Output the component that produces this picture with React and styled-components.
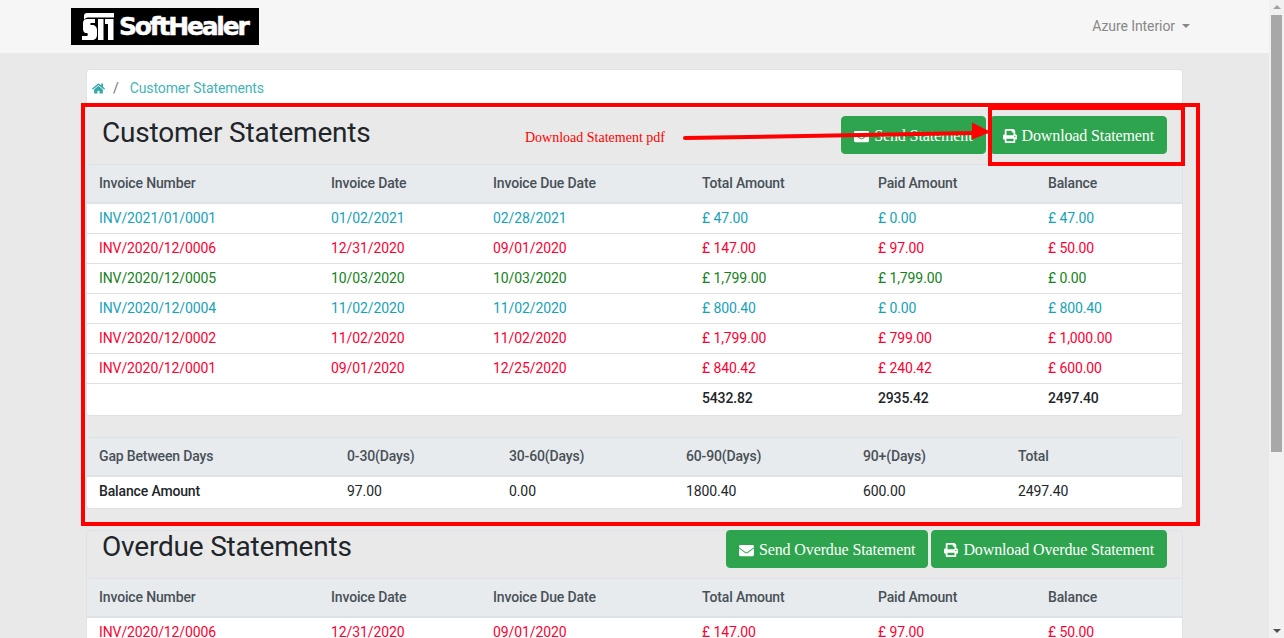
import React from 'react';
import styled, { createGlobalStyle } from 'styled-components';
import { FaHome, FaEnvelope, FaPrint } from 'react-icons/fa';

const GlobalStyle = createGlobalStyle`
    html, body {
        margin: 0;
        height: 638px;
        overflow: hidden;
        background: #e9e9e9;
        font-family: Roboto, "Liberation Sans", sans-serif;
        font-size: 14px;
        color: #212529;
    }
`;

const Page = styled.div`
    position: relative;
    width: 1284px;
    height: 638px;
    overflow: hidden;
`;

const Navbar = styled.header`
    display: flex;
    align-items: center;
    justify-content: space-between;
    height: 53px;
    box-sizing: border-box;
    padding: 0 94px 0 71px;
    background: #f6f6f6;
`;

const Logo = styled.div`
    display: flex;
    align-items: center;
    gap: 5px;
    width: 188px;
    height: 37px;
    box-sizing: border-box;
    padding-left: 11px;
    background: #000;
    overflow: hidden;
`;

const LogoText = styled.span`
    color: #fff;
    font-family: "DejaVu Sans", sans-serif;
    font-weight: 700;
    font-size: 25px;
    letter-spacing: -2.2px;
    -webkit-text-stroke: 0.5px #fff;
`;

const UserMenu = styled.div`
    display: flex;
    align-items: center;
    gap: 7px;
    margin-bottom: 2px;
    color: #888;
    font-size: 14px;
    letter-spacing: -0.08px;
    &::after {
        content: '';
        border-top: 4px solid #888;
        border-left: 4px solid transparent;
        border-right: 4px solid transparent;
    }
`;

const Main = styled.main`
    width: 1097px;
    margin-left: 86px;
    padding-top: 16px;
`;

const Breadcrumb = styled.nav`
    display: flex;
    align-items: center;
    height: 39px;
    box-sizing: border-box;
    padding: 0 0 2px 6px;
    background: #fff;
    border: 1px solid #dfe2e5;
    border-bottom: 0;
    border-radius: 4px 4px 0 0;
    color: #6c757d;
    letter-spacing: -0.1px;
    svg {
        color: #35a7a9;
        font-size: 13px;
        margin-left: -1px;
    }
`;

const Crumb = styled.span`
    margin-left: 11px;
    color: #45b3b5;
`;

const Slash = styled.span`
    margin-left: 8px;
`;

const SectionHead = styled.div`
    display: flex;
    align-items: flex-start;
    justify-content: space-between;
    box-sizing: border-box;
    height: ${(p) => p.$height}px;
    padding: ${(p) => p.$top}px ${(p) => p.$side}px 0;
`;

const Title = styled.h2`
    margin: ${(p) => p.$shift}px 0 0;
    font-size: 28px;
    font-weight: 400;
    line-height: 1.2;
    letter-spacing: -0.2px;
    color: #212529;
`;

const Actions = styled.div`
    display: flex;
    gap: ${(p) => p.$gap}px;
    margin-top: ${(p) => p.$shift || 0}px;
`;

const Button = styled.button`
    display: flex;
    align-items: center;
    gap: 5px;
    height: 38px;
    padding: 2px 12px 0;
    border: 1px solid #2ea44f;
    border-radius: 4px;
    background: #2ea44f;
    color: #fff;
    font-family: "Liberation Serif", serif;
    font-size: 16px;
    letter-spacing: -0.12px;
`;

const MailIcon = styled(FaEnvelope)`
    font-size: 15px;
`;

const PrintIcon = styled(FaPrint)`
    font-size: 14px;
`;

const TableCard = styled.div`
    background: #fff;
    border: 1px solid #dee2e6;
    border-radius: 4px;
    overflow: hidden;
    margin: 0 ${(p) => p.$inset || 0}px ${(p) => p.$gap || 0}px;
`;

const Table = styled.table`
    width: 100%;
    border-collapse: collapse;
    table-layout: fixed;
`;

const HeadCell = styled.th`
    height: 36px;
    padding: 0 12px 1px;
    background: #e7ebee;
    border-bottom: 2px solid #dee2e6;
    color: #495057;
    font-weight: 500;
    letter-spacing: -0.15px;
    text-align: left;
`;

const Row = styled.tr`
    color: ${(p) => p.$color || '#212529'};
`;

const Cell = styled.td`
    height: 27px;
    padding: 0 12px ${(p) => (p.$tall ? 4 : 2)}px;
    border-top: 1px solid #dee2e6;
    font-weight: ${(p) => (p.$bold ? 500 : 400)};
    letter-spacing: ${(p) => (p.$bold ? -0.15 : -0.1)}px;
`;

const SecondCard = styled.section`
    margin-top: 21px;
    border: 1px solid #dee2e6;
    border-bottom: 0;
    border-radius: 4px 4px 0 0;
`;

// red markup drawn on top of the screenshot
const Markup = styled.svg`
    position: absolute;
    left: 0;
    top: 0;
    pointer-events: none;
`;

const MarkupLabel = styled.span`
    position: absolute;
    left: 525px;
    top: 130px;
    color: #ff0000;
    font-family: "Liberation Serif", serif;
    font-size: 14px;
`;

const Scrollbar = styled.div`
    position: absolute;
    right: 0;
    top: 0;
    width: 15px;
    height: 638px;
    background: #f1f1f1;
    &::before {
        content: '';
        position: absolute;
        left: 2px;
        top: 15px;
        width: 11px;
        height: 437px;
        background: #a8a8a8;
    }
`;

const ScrollArrow = styled.span`
    position: absolute;
    left: 4px;
    ${(p) => (p.$down ? 'bottom: 5px;' : 'top: 5px;')}
    border-left: 4px solid transparent;
    border-right: 4px solid transparent;
    ${(p) => (p.$down ? 'border-top: 4px solid #505050;' : 'border-bottom: 4px solid #a0a0a0;')}
`;

const columns = [232, 162, 209, 176, 170, 148];
const agingColumns = [248, 162, 177, 177, 155, 178];

const heads = ['Invoice Number', 'Invoice Date', 'Invoice Due Date', 'Total Amount', 'Paid Amount', 'Balance'];
const teal = '#17a2b8';
const red = '#ff0033';
const green = '#148220';

const invoices = [
    [teal, 'INV/2021/01/0001', '01/02/2021', '02/28/2021', '£ 47.00', '£ 0.00', '£ 47.00'],
    [red, 'INV/2020/12/0006', '12/31/2020', '09/01/2020', '£ 147.00', '£ 97.00', '£ 50.00'],
    [green, 'INV/2020/12/0005', '10/03/2020', '10/03/2020', '£ 1,799.00', '£ 1,799.00', '£ 0.00'],
    [teal, 'INV/2020/12/0004', '11/02/2020', '11/02/2020', '£ 800.40', '£ 0.00', '£ 800.40'],
    [red, 'INV/2020/12/0002', '11/02/2020', '11/02/2020', '£ 1,799.00', '£ 799.00', '£ 1,000.00'],
    [red, 'INV/2020/12/0001', '09/01/2020', '12/25/2020', '£ 840.42', '£ 240.42', '£ 600.00'],
];

function Cols({ widths }) {
    return (
        <colgroup>
            {widths.map((w, i) => <col key={i} width={w} />)}
        </colgroup>
    );
}

function InvoiceHead() {
    return (
        <thead>
            <tr>{heads.map((h) => <HeadCell key={h}>{h}</HeadCell>)}</tr>
        </thead>
    );
}

function InvoiceRow({ row }) {
    const [color, ...cells] = row;
    return (
        <Row $color={color}>
            {cells.map((c, i) => <Cell key={i}>{c}</Cell>)}
        </Row>
    );
}

function LogoMark() {
    return (
        <svg width="32" height="27" viewBox="0 0 32 27" fill="#fff">
            <path d="M5 0h27v4.5H6C4 4.5 3 5.5 2 7V3c0-2 1-3 3-3z" />
            <path d="M1 10c0-3 2-4 4-4h8v4H9c-1 0-1 2 0 2h1c3 0 5 2 5 5v5c0 3-2 5-5 5H0v-4h5c1 0 1-3 0-3H4c-2 0-3-2-3-4z" />
            <path d="M16 6h5.5v21H16z" />
            <path d="M23 6h8.5v21H26V11h-3z" />
        </svg>
    );
}

export default function App() {
    return (
        <Page>
            <GlobalStyle />
            <Navbar>
                <Logo>
                    <LogoMark />
                    <LogoText>SoftHealer</LogoText>
                </Logo>
                <UserMenu>Azure Interior</UserMenu>
            </Navbar>
            <Main>
                <Breadcrumb>
                    <FaHome />
                    <Slash>/</Slash>
                    <Crumb>Customer Statements</Crumb>
                </Breadcrumb>
                <SectionHead $height={56} $top={8} $side={16}>
                    <Title $shift={0}>Customer Statements</Title>
                    <Actions $gap={4}>
                        <Button><MailIcon />Send Statement</Button>
                        <Button><PrintIcon />Download Statement</Button>
                    </Actions>
                </SectionHead>
                <TableCard $gap={21}>
                    <Table>
                        <Cols widths={columns} />
                        <InvoiceHead />
                        <tbody>
                            {invoices.map((row) => <InvoiceRow key={row[1]} row={row} />)}
                            <Row>
                                <Cell $tall />
                                <Cell $tall />
                                <Cell $tall />
                                <Cell $tall $bold>5432.82</Cell>
                                <Cell $tall $bold>2935.42</Cell>
                                <Cell $tall $bold>2497.40</Cell>
                            </Row>
                        </tbody>
                    </Table>
                </TableCard>
                <TableCard>
                    <Table>
                        <Cols widths={agingColumns} />
                        <thead>
                            <tr>
                                {['Gap Between Days', '0-30(Days)', '30-60(Days)', '60-90(Days)', '90+(Days)', 'Total'].map((h) => (
                                    <HeadCell key={h}>{h}</HeadCell>
                                ))}
                            </tr>
                        </thead>
                        <tbody>
                            <Row>
                                <Cell $tall $bold>Balance Amount</Cell>
                                <Cell $tall>97.00</Cell>
                                <Cell $tall>0.00</Cell>
                                <Cell $tall>1800.40</Cell>
                                <Cell $tall>600.00</Cell>
                                <Cell $tall>2497.40</Cell>
                            </Row>
                        </tbody>
                    </Table>
                </TableCard>
                <SecondCard>
                    <SectionHead $height={47} $top={0} $side={15}>
                        <Title $shift={-1}>Overdue Statements</Title>
                        <Actions $gap={3} $shift={-1}>
                            <Button><MailIcon />Send Overdue Statement</Button>
                            <Button><PrintIcon />Download Overdue Statement</Button>
                        </Actions>
                    </SectionHead>
                    <TableCard $inset={-1}>
                        <Table>
                            <Cols widths={columns} />
                            <InvoiceHead />
                            <tbody>
                                <InvoiceRow row={invoices[1]} />
                            </tbody>
                        </Table>
                    </TableCard>
                </SecondCard>
            </Main>
            <MarkupLabel>Download Statement pdf</MarkupLabel>
            <Markup width="1284" height="638" viewBox="0 0 1284 638">
                <rect x="83" y="105" width="1115" height="419" fill="none" stroke="#ff0000" strokeWidth="4" />
                <rect x="990" y="108" width="193" height="56" fill="none" stroke="#ff0000" strokeWidth="4" />
                <path d="M685 138L975 133" stroke="#ff0000" strokeWidth="4" strokeLinecap="round" />
                <path d="M972 122.5L991 132L972 139.5z" fill="#ff0000" />
            </Markup>
            <Scrollbar>
                <ScrollArrow />
                <ScrollArrow $down />
            </Scrollbar>
        </Page>
    );
}
